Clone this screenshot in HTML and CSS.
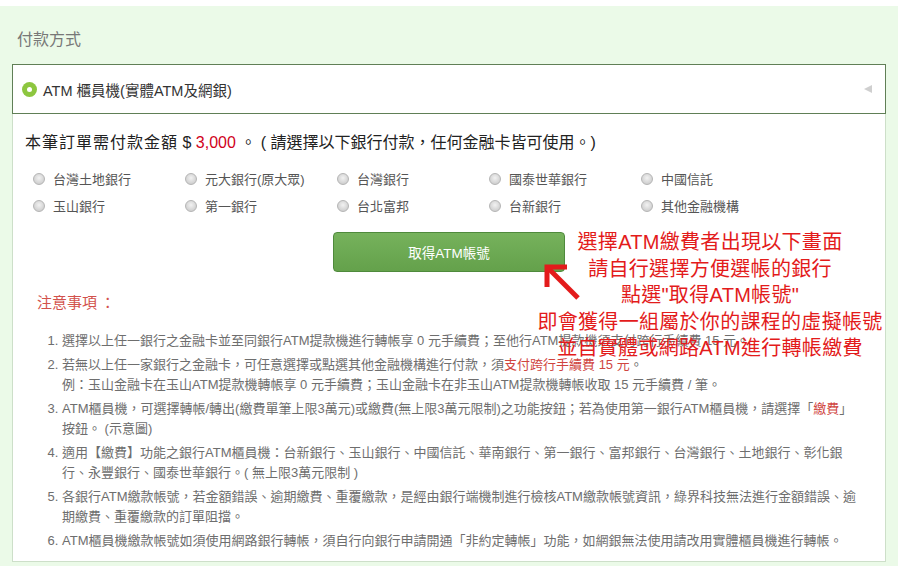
FILE: index.html
```html
<!DOCTYPE html>
<html lang="zh-Hant">
<head>
<meta charset="utf-8">
<title>付款方式</title>
<link rel="stylesheet" href="styles.css">
</head>
<body>
<div class="panel">
  <div class="title">付款方式</div>
  <div class="method">
    <div class="method-head">
      <span class="radio-on"></span>
      <span class="method-name">ATM 櫃員機(實體ATM及網銀)</span>
      <span class="caret"></span>
    </div>
    <div class="method-body">
      <p class="amount"><span class="amount-lead">本筆訂單需付款金額</span> $ <span class="price">3,000</span> 。 ( 請選擇以下銀行付款，任何金融卡皆可使用。)</p>
      <div class="banks">
        <label class="bank"><span class="radio"></span>台灣土地銀行</label>
        <label class="bank"><span class="radio"></span>元大銀行(原大眾)</label>
        <label class="bank"><span class="radio"></span>台灣銀行</label>
        <label class="bank"><span class="radio"></span>國泰世華銀行</label>
        <label class="bank"><span class="radio"></span>中國信託</label>
        <label class="bank"><span class="radio"></span>玉山銀行</label>
        <label class="bank"><span class="radio"></span>第一銀行</label>
        <label class="bank"><span class="radio"></span>台北富邦</label>
        <label class="bank"><span class="radio"></span>台新銀行</label>
        <label class="bank"><span class="radio"></span>其他金融機構</label>
      </div>
      <div class="action"><button class="btn" type="button">取得ATM帳號</button></div>
      <div class="notes">
        <div class="notes-title">注意事項 ：</div>
        <ol class="notes-list">
          <li>選擇以上任一銀行之金融卡並至同銀行ATM提款機進行轉帳享 0 元手續費；至他行ATM提款機須支付跨行手續費 15 元。</li>
          <li>若無以上任一家銀行之金融卡，可任意選擇或點選其他金融機構進行付款，須<span class="hl">支付跨行手續費 15 元</span>。<br>例：玉山金融卡在玉山ATM提款機轉帳享 0 元手續費；玉山金融卡在非玉山ATM提款機轉帳收取 15 元手續費 / 筆。</li>
          <li>ATM櫃員機，可選擇轉帳/轉出(繳費單筆上限3萬元)或繳費(無上限3萬元限制)之功能按鈕；若為使用第一銀行ATM櫃員機，請選擇「<span class="hl">繳費</span>」<br>按鈕。 (示意圖)</li>
          <li>適用【繳費】功能之銀行ATM櫃員機：台新銀行、玉山銀行、中國信託、華南銀行、第一銀行、富邦銀行、台灣銀行、土地銀行、彰化銀<br>行、永豐銀行、國泰世華銀行。( 無上限3萬元限制 )</li>
          <li>各銀行ATM繳款帳號，若金額錯誤、逾期繳費、重覆繳款，是經由銀行端機制進行檢核ATM繳款帳號資訊，綠界科技無法進行金額錯誤、逾<br>期繳費、重覆繳款的訂單阻擋。</li>
          <li>ATM櫃員機繳款帳號如須使用網路銀行轉帳，須自行向銀行申請開通「非約定轉帳」功能，如網銀無法使用請改用實體櫃員機進行轉帳。</li>
        </ol>
      </div>
    </div>
  </div>
  <div class="annotation">選擇ATM繳費者出現以下畫面<br>請自行選擇方便選帳的銀行<br>點選"取得ATM帳號"<br>即會獲得一組屬於你的課程的虛擬帳號<br>並自實體或網路ATM進行轉帳繳費</div>
  <svg class="arrow" width="44" height="44" viewBox="0 0 44 44">
    <line x1="7" y1="7" x2="38" y2="38" stroke="#e31b1b" stroke-width="5"/>
    <polyline points="27,7 7,7 7,27" fill="none" stroke="#e31b1b" stroke-width="5" stroke-linejoin="miter"/>
  </svg>
</div>
</body>
</html>
```
FILE: styles.css
```css
* { box-sizing: border-box; }
html, body { margin: 0; padding: 0; background: #ffffff; }
body {
  font-family: "Liberation Sans", "Noto Sans CJK TC", sans-serif;
  color: #333;
}
.panel {
  position: relative;
  margin-top: 6px;
  background: #ebfae8;
  padding: 20px 12px 4px 12px;
  min-height: 560px;
}
.title {
  font-size: 16px;
  line-height: 24px;
  color: #777;
  padding-left: 5px;
  margin-bottom: 14px;
  font-family: "Noto Sans CJK TC", sans-serif;
}
.method { background: #fff; }
.method-head {
  display: flex;
  align-items: center;
  height: 50px;
  border: 1px solid #607f56;
  padding-left: 9px;
  padding-right: 13px;
}
.radio-on {
  width: 15px;
  height: 15px;
  border-radius: 50%;
  background: #8dc63f;
  display: flex;
  align-items: center;
  justify-content: center;
  flex: none;
}
.radio-on::after {
  content: "";
  width: 5px;
  height: 5px;
  border-radius: 50%;
  background: #fff;
}
.method-name {
  margin-left: 6px;
  font-size: 14.5px;
  color: #333;
}
.caret {
  margin-left: auto;
  width: 0;
  height: 0;
  border-right: 8px solid #cfcfcf;
  border-top: 4.5px solid transparent;
  border-bottom: 4.5px solid transparent;
}
.method-body {
  border: 1px solid #cddfc9;
  border-top: none;
  height: 448px;
  padding: 17px 12px 0 12px;
}
.amount {
  margin: 0;
  font-size: 16px;
  line-height: 24px;
  color: #222;
  white-space: nowrap;
}
.amount-lead {
  letter-spacing: 1px;
}
.price { color: #d0021b; }
.banks {
  display: grid;
  grid-template-columns: repeat(5, 152px);
  grid-auto-rows: 27px;
  margin: 10px 0 0 8px;
}
.bank {
  display: flex;
  align-items: center;
  font-size: 13px;
  color: #555;
  white-space: nowrap;
}
.radio {
  width: 12px;
  height: 12px;
  border-radius: 50%;
  border: 1px solid #b5b5b5;
  background: radial-gradient(circle at 50% 40%, #f2f2f2 0%, #d6d6d6 60%, #c4c4c4 100%);
  margin-right: 8px;
  flex: none;
}
.action {
  display: flex;
  justify-content: center;
  margin-top: 13px;
}
.btn {
  width: 232px;
  height: 40px;
  border: 1px solid #4f8a3c;
  border-radius: 4px;
  background: linear-gradient(#76b25c, #64a14b);
  color: #fff;
  font-family: "Liberation Sans", "Noto Sans CJK TC", sans-serif;
  font-size: 13.5px;
  padding: 0;
}
.notes {
  padding-left: 12px;
  margin-top: 20px;
}
.notes-title {
  font-size: 15px;
  line-height: 20px;
  color: #d2524c;
  font-family: "Noto Sans CJK TC", sans-serif;
}
.notes-list {
  margin: 19px 0 0 0;
  padding-left: 25px;
  font-size: 13px;
  line-height: 20px;
  color: #6e6e6e;
}
.notes-list li {
  margin-bottom: 4px;
  white-space: nowrap;
}
.hl { color: #d0453f; }
.annotation {
  position: absolute;
  left: 500px;
  top: 223px;
  width: 420px;
  text-align: center;
  font-size: 20px;
  line-height: 26.5px;
  letter-spacing: 0.3px;
  color: #e31b1b;
  font-family: "Liberation Sans", "Noto Sans CJK TC", sans-serif;
  white-space: nowrap;
}
.arrow {
  position: absolute;
  left: 540px;
  top: 254px;
}
```
